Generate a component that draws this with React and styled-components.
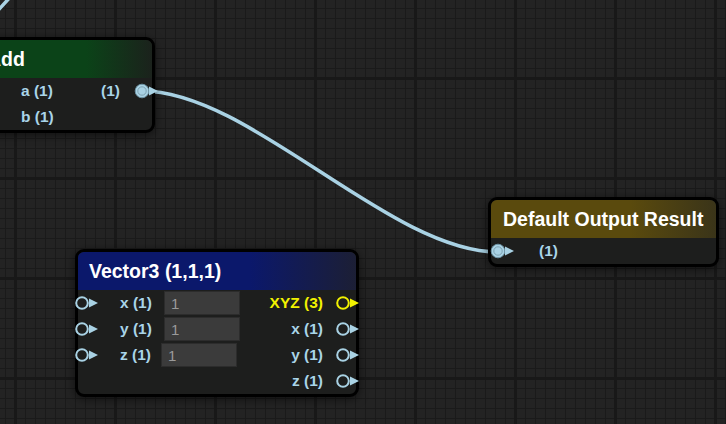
import React from "react";
import styled, { createGlobalStyle } from "styled-components";

const GlobalStyle = createGlobalStyle`
  html, body {
    margin: 0;
    padding: 0;
    background: #222222;
    overflow: hidden;
  }
  body {
    font-family: "Liberation Sans", Arial, sans-serif;
  }
`;

const Canvas = styled.div`
  position: relative;
  width: 100vw;
  height: 100vh;
  overflow: hidden;
  background-color: #232323;
  background-image:
    linear-gradient(to right, #181818 3px, transparent 3px),
    linear-gradient(to bottom, #181818 3px, transparent 3px),
    linear-gradient(to right, #1a1a1a 1px, transparent 1px),
    linear-gradient(to bottom, #1a1a1a 1px, transparent 1px);
  background-size: 100px 100px, 100px 100px, 10px 10px, 10px 10px;
  background-position: 14px 0, 0 77px, 5px 0, 0 8px;
`;

const Links = styled.svg`
  position: absolute;
  left: 0;
  top: 0;
  width: 100%;
  height: 100%;
  pointer-events: none;
`;

const Node = styled.div`
  position: absolute;
  left: ${(p) => p.$x}px;
  top: ${(p) => p.$y}px;
  width: ${(p) => p.$w}px;
  box-sizing: border-box;
  border: 3px solid #000;
  border-radius: 9px;
  background: #1d1e1d;
  box-shadow: 0 2px 10px rgba(0, 0, 0, 0.55);
`;

const Title = styled.div`
  height: 38px;
  display: flex;
  align-items: center;
  padding-left: ${(p) => p.$pad || 11}px;
  border-radius: 6px 6px 0 0;
  color: #fff;
  font-size: 19.5px;
  font-weight: bold;
  white-space: nowrap;
  overflow: hidden;
  background: linear-gradient(
    to right,
    ${(p) => p.$from} 0%,
    ${(p) => p.$from} 62%,
    ${(p) => p.$to} 100%
  );
`;

const Body = styled.div`
  display: flex;
  flex-direction: column;
`;

const Row = styled.div`
  display: flex;
  align-items: center;
  height: 26px;
`;

const Label = styled.span`
  font-size: 15.5px;
  font-weight: bold;
  color: ${(p) => p.$color || "#a9d4e8"};
  white-space: nowrap;
  margin-left: ${(p) => p.$ml || 0}px;
  margin-right: ${(p) => p.$mr || 0}px;
`;

const InLabel = styled(Label)`
  width: 34px;
  margin-left: 21px;
`;

const Spacer = styled.div`
  flex: 1;
`;

const Field = styled.div`
  box-sizing: border-box;
  width: 76px;
  height: 24px;
  margin-left: ${(p) => 10 - (p.$shift || 0)}px;
  padding-left: 6px;
  display: flex;
  align-items: center;
  background: #3b3b3b;
  border: 1px solid #2c2c2c;
  color: #9a9a9a;
  font-size: 15px;
`;

const SocketSvg = styled.svg`
  flex: none;
  display: block;
  width: 24px;
  height: 14px;
  margin-left: ${(p) => (p.$ml === undefined ? 0 : p.$ml)}px;
  margin-right: ${(p) => (p.$mr === undefined ? 0 : p.$mr)}px;
  overflow: visible;
`;

function Socket({ linked, color = "#a9d2e4", ml, mr }) {
  return (
    <SocketSvg viewBox="0 0 24 14" $ml={ml} $mr={mr}>
      {linked ? (
        <>
          <circle cx="7" cy="7" r="6.8" fill={color} stroke="#6f95a6" strokeWidth="1" />
          <circle cx="7" cy="7" r="4.2" fill="none" stroke="#7ea3b3" strokeWidth="1" />
        </>
      ) : (
        <circle cx="7" cy="7" r="5.8" fill="#1d1e1d" stroke={color} strokeWidth="2" />
      )}
      <polygon points="14,2.5 23,7 14,11.5" fill={color} />
    </SocketSvg>
  );
}

const vectorRows = [
  { name: "x (1)", out: "XYZ (3)", color: "#f2f200" },
  { name: "y (1)", out: "x (1)" },
  { name: "z (1)", out: "y (1)", shift: 3 },
  { name: null, out: "z (1)" },
];

export default function App() {
  return (
    <>
      <GlobalStyle />
      <Canvas>
        <Links viewBox="0 0 726 424">
          <path
            d="M -8 17 Q 2 6 13 -6"
            fill="none"
            stroke="#a9d2e4"
            strokeWidth="3.5"
            strokeLinecap="round"
          />
          <path
            d="M 142 91 C 250 91, 390 252, 498 252"
            fill="none"
            stroke="#a9d2e4"
            strokeWidth="3.5"
          />
        </Links>

        <Node $x={-24} $y={37} $w={179}>
          <Title $from="#0b4318" $to="#1b221c" $pad={8}>
            Add
          </Title>
          <Body>
            <Row>
              <Socket ml={-3} />
              <InLabel>a (1)</InLabel>
              <Spacer />
              <Label $mr={15}>(1)</Label>
              <Socket linked mr={-7} />
            </Row>
            <Row>
              <Socket ml={-3} />
              <InLabel>b (1)</InLabel>
            </Row>
          </Body>
        </Node>

        <Node $x={488} $y={197} $w={231}>
          <Title $from="#5a4a0d" $to="#3a3419" $pad={12}>
            Default Output Result
          </Title>
          <Body>
            <Row>
              <Socket linked ml={0} />
              <Label $ml={24}>(1)</Label>
            </Row>
          </Body>
        </Node>

        <Node $x={75} $y={249} $w={284}>
          <Title $from="#0b186b" $to="#1c1f35" $pad={11}>
            Vector3 (1,1,1)
          </Title>
          <Body>
            {vectorRows.map((r, i) => (
              <Row key={i}>
                {r.name ? (
                  <>
                    <Socket ml={-3} />
                    <InLabel>{r.name}</InLabel>
                    <Field $shift={r.shift}>1</Field>
                  </>
                ) : null}
                <Spacer />
                <Label $color={r.color} $mr={13}>
                  {r.out}
                </Label>
                <Socket color={r.color} mr={-4} />
              </Row>
            ))}
          </Body>
        </Node>
      </Canvas>
    </>
  );
}
